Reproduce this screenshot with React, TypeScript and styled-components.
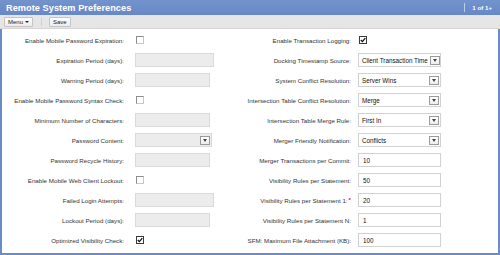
import { Fragment } from 'react';
import styled, { createGlobalStyle } from 'styled-components';

type Field =
  | { kind: 'check'; label: string; checked?: boolean }
  | { kind: 'text'; label: string; value?: string; disabled?: boolean; w?: number; required?: boolean }
  | { kind: 'select'; label: string; value?: string; disabled?: boolean; w?: number };

const GlobalStyle = createGlobalStyle`
  html, body {
    margin: 0;
    padding: 0;
    background: #ffffff;
  }
  body {
    font-family: "Liberation Sans", Arial, sans-serif;
  }
`;

const Panel = styled.div`
  width: 500px;
  height: 255px;
  display: flex;
  flex-direction: column;
  box-sizing: border-box;
  overflow: hidden;
`;

const TitleBar = styled.div`
  height: 15px;
  display: flex;
  align-items: center;
  justify-content: space-between;
  background: linear-gradient(#7393cd, #6788c6);
  padding: 0 8px 0 6px;
  flex-shrink: 0;
`;

const Title = styled.h1`
  margin: 0;
  color: #ffffff;
  font-size: 9.2px;
  font-weight: bold;
  letter-spacing: 0.05px;
`;

const Pager = styled.span`
  color: #ffffff;
  font-size: 6.2px;
  font-weight: bold;
  padding-left: 7px;
  border-left: 1px solid rgba(255, 255, 255, 0.55);
  line-height: 9px;
`;

const Toolbar = styled.div`
  height: 14px;
  display: flex;
  align-items: center;
  background: #e6e6e6;
  border-bottom: 1px solid #d6d6d6;
  padding: 0 4px;
  box-sizing: border-box;
  flex-shrink: 0;
`;

const ToolButton = styled.button`
  height: 10px;
  padding: 0 3px;
  margin: 0;
  display: flex;
  align-items: center;
  gap: 2px;
  font-family: inherit;
  font-size: 6px;
  color: #222;
  background: linear-gradient(#fdfdfd, #ececec);
  border: 1px solid #c4c4c4;
  border-radius: 1px;
`;

const Caret = styled.span`
  width: 0;
  height: 0;
  border-left: 2px solid transparent;
  border-right: 2px solid transparent;
  border-top: 2.5px solid #222;
`;

const ToolSep = styled.span`
  width: 1px;
  height: 8px;
  background: #cfcfcf;
  margin: 0 7px 0 8px;
`;

const Body = styled.div`
  flex: 1;
  display: flex;
  background: #ffffff;
  border: 2px solid #6b8cc8;
  border-top: none;
  padding-top: 1px;
`;

const Column = styled.div<{ $width: number; $label: number; $gap: number }>`
  width: ${(p) => p.$width}px;
  display: grid;
  grid-template-columns: ${(p) => p.$label}px 1fr;
  grid-auto-rows: 20px;
  column-gap: ${(p) => p.$gap}px;
  align-items: center;
  flex-shrink: 0;
`;

const Label = styled.label`
  display: flex;
  justify-content: flex-end;
  white-space: nowrap;
  font-size: 6.2px;
  color: #333333;
`;

const Required = styled.span`
  color: #d11919;
  font-weight: bold;
  margin-left: 1px;
  position: relative;
  top: -1px;
`;

const Control = styled.div`
  display: flex;
  align-items: center;
`;

const TextBox = styled.div<{ $w: number; $disabled?: boolean }>`
  width: ${(p) => p.$w}px;
  height: 14px;
  box-sizing: border-box;
  display: flex;
  align-items: center;
  padding: 0 4px;
  font-size: 6.3px;
  color: #111;
  white-space: nowrap;
  overflow: hidden;
  background: ${(p) => (p.$disabled ? '#ececec' : '#ffffff')};
  border: 1px solid ${(p) => (p.$disabled ? '#dadada' : '#d2d2d2')};
`;

const SelectBox = styled(TextBox)`
  justify-content: space-between;
  gap: 2px;
  padding: 0 1px 0 3px;
`;

const DropButton = styled.span`
  width: 10px;
  height: 9px;
  box-sizing: border-box;
  display: flex;
  align-items: center;
  justify-content: center;
  border: 1px solid #9a9a9a;
  background: linear-gradient(#ffffff, #ededed);
  flex-shrink: 0;
`;

const DropCaret = styled.span`
  width: 0;
  height: 0;
  border-left: 2.5px solid transparent;
  border-right: 2.5px solid transparent;
  border-top: 3px solid #444;
`;

const CheckBox = styled.span<{ $checked?: boolean }>`
  width: 8px;
  height: 8px;
  box-sizing: border-box;
  margin-left: 1px;
  display: flex;
  align-items: center;
  justify-content: center;
  background: #ffffff;
  border: 1px solid ${(p) => (p.$checked ? '#3a3a3a' : '#8c8c8c')};
  border-right-color: ${(p) => (p.$checked ? '#3a3a3a' : '#c8c8c8')};
  border-bottom-color: ${(p) => (p.$checked ? '#3a3a3a' : '#c8c8c8')};
`;

const leftFields: Field[] = [
  { kind: 'check', label: 'Enable Mobile Password Expiration:' },
  { kind: 'text', label: 'Expiration Period (days):', disabled: true, w: 79 },
  { kind: 'text', label: 'Warning Period (days):', disabled: true, w: 75 },
  { kind: 'check', label: 'Enable Mobile Password Syntax Check:' },
  { kind: 'text', label: 'Minimum Number of Characters:', disabled: true, w: 75 },
  { kind: 'select', label: 'Password Content:', disabled: true, w: 77 },
  { kind: 'text', label: 'Password Recycle History:', disabled: true, w: 75 },
  { kind: 'check', label: 'Enable Mobile Web Client Lockout:' },
  { kind: 'text', label: 'Failed Login Attempts:', disabled: true, w: 79 },
  { kind: 'text', label: 'Lockout Period (days):', disabled: true, w: 75 },
  { kind: 'check', label: 'Optimized Visibility Check:', checked: true },
];

const rightFields: Field[] = [
  { kind: 'check', label: 'Enable Transaction Logging:', checked: true },
  { kind: 'select', label: 'Docking Timestamp Source:', value: 'Client Transaction Time' },
  { kind: 'select', label: 'System Conflict Resolution:', value: 'Server Wins' },
  { kind: 'select', label: 'Intersection Table Conflict Resolution:', value: 'Merge' },
  { kind: 'select', label: 'Intersection Table Merge Rule:', value: 'First In' },
  { kind: 'select', label: 'Merger Friendly Notification:', value: 'Conflicts' },
  { kind: 'text', label: 'Merger Transactions per Commit:', value: '10' },
  { kind: 'text', label: 'Visibility Rules per Statement:', value: '50' },
  { kind: 'text', label: 'Visibility Rules per Statement 1:', value: '20', required: true },
  { kind: 'text', label: 'Visibility Rules per Statement N:', value: '1' },
  { kind: 'text', label: 'SFM: Maximum File Attachment (KB):', value: '100' },
];

const renderControl = (f: Field) => {
  if (f.kind === 'check') {
    return (
      <CheckBox $checked={f.checked}>
        {f.checked && (
          <svg width="6" height="6" viewBox="0 0 6 6">
            <path d="M0.8 3 L2.4 4.6 L5.3 1.2" fill="none" stroke="#111" strokeWidth="1.3" />
          </svg>
        )}
      </CheckBox>
    );
  }
  if (f.kind === 'select') {
    return (
      <SelectBox $w={f.w ?? 83} $disabled={f.disabled}>
        <span>{f.value}</span>
        <DropButton>
          <DropCaret />
        </DropButton>
      </SelectBox>
    );
  }
  return (
    <TextBox $w={f.w ?? 83} $disabled={f.disabled}>
      {f.value}
    </TextBox>
  );
};

const FieldRows = ({ fields }: { fields: Field[] }) => (
  <>
    {fields.map((f) => (
      <Fragment key={f.label}>
        <Label>
          {f.label}
          {f.kind === 'text' && f.required && <Required>*</Required>}
        </Label>
        <Control>{renderControl(f)}</Control>
      </Fragment>
    ))}
  </>
);

const App = () => {
  return (
    <Panel>
      <GlobalStyle />
      <TitleBar>
        <Title>Remote System Preferences</Title>
        <Pager>1 of 1+</Pager>
      </TitleBar>
      <Toolbar>
        <ToolButton>
          Menu <Caret />
        </ToolButton>
        <ToolSep />
        <ToolButton>Save</ToolButton>
      </Toolbar>
      <Body>
        <Column $width={225} $label={122} $gap={11}>
          <FieldRows fields={leftFields} />
        </Column>
        <Column $width={260} $label={124} $gap={7}>
          <FieldRows fields={rightFields} />
        </Column>
      </Body>
    </Panel>
  );
};

export default App;
